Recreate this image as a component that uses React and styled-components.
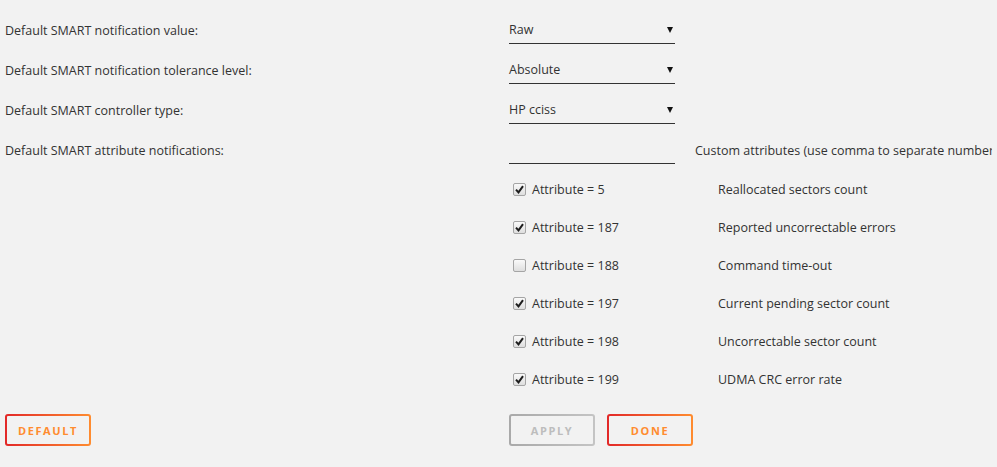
import React from 'react'
import styled, { createGlobalStyle } from 'styled-components'

const GlobalStyle = createGlobalStyle`
    body {
        margin: 0;
        background: #f2f2f2;
        font-family: "Open Sans", "Noto Sans", sans-serif;
        font-size: 12.5px;
        color: #333;
    }
`

const Form = styled.div`
    padding: 9px 5px 0 5px;
`

const Row = styled.div`
    display: grid;
    grid-template-columns: 504px 166px 1fr;
    align-items: center;
    height: 40px;
`

const Label = styled.div`
    white-space: nowrap;
    padding-top: 2px;
`

const Select = styled.div`
    display: flex;
    align-items: center;
    justify-content: space-between;
    height: 30px;
    box-sizing: border-box;
    border-bottom: 1px solid #333;
    padding-top: 2px;
`

const Arrow = styled.span`
    width: 0;
    height: 0;
    margin-right: 2px;
    border-left: 3px solid transparent;
    border-right: 3px solid transparent;
    border-top: 6px solid #111;
`

const Input = styled.div`
    height: 30px;
    box-sizing: border-box;
    border-bottom: 1px solid #333;
`

const Note = styled.div`
    padding: 2px 0 0 20px;
    white-space: nowrap;
    overflow: hidden;
`

const AttrRow = styled.div`
    display: grid;
    grid-template-columns: 504px 209px 1fr;
    align-items: center;
    height: 38px;
`

const Check = styled.label`
    display: flex;
    align-items: center;
    gap: 6px;
    padding: 2px 0 0 4px;
`

const Box = styled.span`
    width: 13px;
    height: 13px;
    box-sizing: border-box;
    border: 1px solid #a5a5a5;
    border-radius: 2px;
    background: linear-gradient(#fafafa, #dedede);
    display: flex;
    align-items: center;
    justify-content: center;
`

const Buttons = styled.div`
    display: grid;
    grid-template-columns: 504px auto auto 1fr;
    margin-top: 17px;
`

const Spacer = styled.div``

const Button = styled.button`
    width: 86px;
    height: 32px;
    margin-left: ${p => p.$gap ? '12px' : '0'};
    box-sizing: border-box;
    border: 2px solid transparent;
    border-radius: 3px;
    background:
        linear-gradient(#f2f2f2, #f2f2f2) padding-box,
        ${p => p.disabled
            ? 'linear-gradient(90deg, #a9a9a9, #c4c4c4)'
            : 'linear-gradient(90deg, #e22828, #ff8c2f)'} border-box;
    color: ${p => p.disabled ? '#bdbdbd' : '#ff8c2f'};
    font-family: "Open Sans", sans-serif;
    font-size: 11px;
    font-weight: 700;
    letter-spacing: 1.6px;
    text-transform: uppercase;
    padding: 0;
`

const attributes = [
    { id: 5, on: true, text: 'Reallocated sectors count' },
    { id: 187, on: true, text: 'Reported uncorrectable errors' },
    { id: 188, on: false, text: 'Command time-out' },
    { id: 197, on: true, text: 'Current pending sector count' },
    { id: 198, on: true, text: 'Uncorrectable sector count' },
    { id: 199, on: true, text: 'UDMA CRC error rate' },
]

function Tick() {
    return (
        <svg width="9" height="9" viewBox="0 0 9 9">
            <path d="M1 4.6 L3.5 7.4 L8 1.2" fill="none" stroke="#1e1e1e" strokeWidth="2" />
        </svg>
    )
}

export default function App() {
    return (
        <Form>
            <GlobalStyle />
            <Row>
                <Label>Default SMART notification value:</Label>
                <Select>Raw<Arrow /></Select>
            </Row>
            <Row>
                <Label>Default SMART notification tolerance level:</Label>
                <Select>Absolute<Arrow /></Select>
            </Row>
            <Row>
                <Label>Default SMART controller type:</Label>
                <Select>HP cciss<Arrow /></Select>
            </Row>
            <Row>
                <Label>Default SMART attribute notifications:</Label>
                <Input />
                <Note>Custom attributes (use comma to separate numbers)</Note>
            </Row>
            {attributes.map(a => (
                <AttrRow key={a.id}>
                    <Spacer />
                    <Check>
                        <Box>{a.on && <Tick />}</Box>
                        Attribute = {a.id}
                    </Check>
                    <Label>{a.text}</Label>
                </AttrRow>
            ))}
            <Buttons>
                <Button>Default</Button>
                <Button disabled>Apply</Button>
                <Button $gap>Done</Button>
            </Buttons>
        </Form>
    )
}
